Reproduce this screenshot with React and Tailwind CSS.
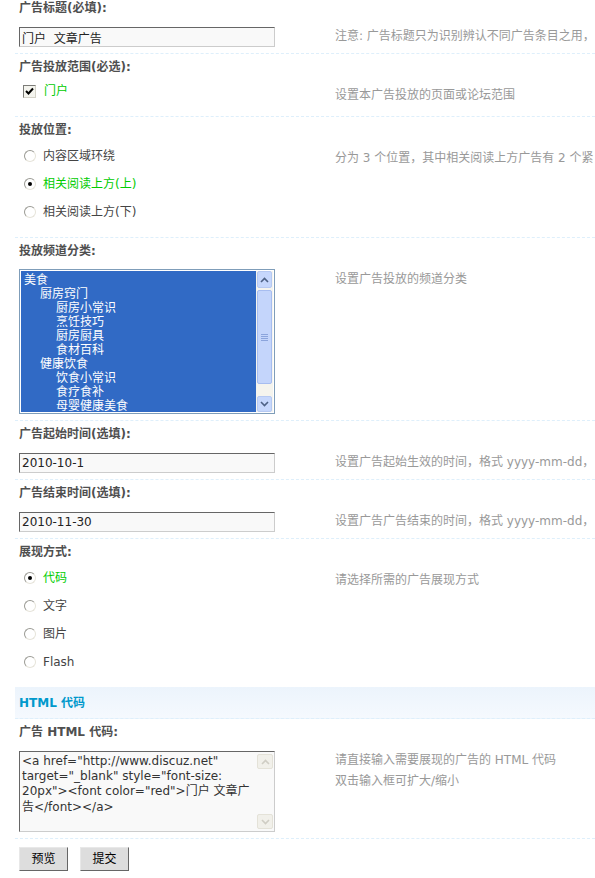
import React from 'react'

const channels = [
  { name: '美食', level: 0 },
  { name: '厨房窍门', level: 1 },
  { name: '厨房小常识', level: 2 },
  { name: '烹饪技巧', level: 2 },
  { name: '厨房厨具', level: 2 },
  { name: '食材百科', level: 2 },
  { name: '健康饮食', level: 1 },
  { name: '饮食小常识', level: 2 },
  { name: '食疗食补', level: 2 },
  { name: '母婴健康美食', level: 2 },
]

const indent = ['pl-[3px]', 'pl-[19px]', 'pl-[35px]']

function Section({ label, first, last, children, tip, bodyCls, tipCls }) {
  return (
    <div className={last ? '' : 'border-b border-dashed border-[#deeffb]'}>
      <div className={`${first ? '' : 'pt-[5px]'} pl-[4px] leading-[16px] font-bold text-[#4f4f4f]`}>{label}</div>
      <div className="flex">
        <div className={`w-[320px] shrink-0 pl-[4px] ${bodyCls}`}>{children}</div>
        <div className={tipCls || 'pt-[12px] leading-[16px] text-[#999] whitespace-nowrap'}>{tip}</div>
      </div>
    </div>
  )
}

function TextInput({ value }) {
  return (
    <input
      readOnly
      defaultValue={value}
      className="block w-[256px] h-[20px] border border-[#ccc] border-t-[#666] border-l-[#666] bg-[#f9f9f9] px-[2px] text-[12px] text-[#222] outline-none"
    />
  )
}

function Radio({ checked, label }) {
  return (
    <div className="h-[28px] flex items-center">
      <span className="ml-[5px] w-[12px] h-[12px] rounded-full border border-[#9a9a94] border-b-[#e6e4da] border-r-[#e6e4da] bg-white flex items-center justify-center">
        {checked && <span className="w-[4px] h-[4px] rounded-full bg-black" />}
      </span>
      <span className={`ml-[7px] ${checked ? 'text-[#00cc00]' : 'text-[#444]'}`}>{label}</span>
    </div>
  )
}

function Arrow({ up, color }) {
  return (
    <svg width="9" height="6" viewBox="0 0 9 6">
      <path d={up ? 'M1 5 L4.5 1.5 L8 5' : 'M1 1 L4.5 4.5 L8 1'} fill="none" stroke={color} strokeWidth="1.6" />
    </svg>
  )
}

export default function App() {
  return (
    <div className="w-[595px] h-[878px] overflow-hidden bg-white pl-[15px] text-[12px] font-['DejaVu_Sans','Noto_Sans_CJK_SC',sans-serif]">
      <Section first label="广告标题(必填):" bodyCls="pt-[11px] pb-[6px]" tip="注意: 广告标题只为识别辨认不同广告条目之用，">
        <TextInput value="门户  文章广告" />
      </Section>

      <Section label="广告投放范围(必选):" bodyCls="pt-[6px] pb-[15px]" tip="设置本广告投放的页面或论坛范围">
        <div className="h-[20px] flex items-center">
          <span className="ml-[4px] w-[13px] h-[13px] border border-[#7c7c78] border-b-[#d4d2c8] border-r-[#d4d2c8] bg-[#f4f4ee] flex items-center justify-center">
            <svg width="9" height="8" viewBox="0 0 9 8">
              <path d="M1 4 L3.5 6.5 L8 1.5" fill="none" stroke="#000" strokeWidth="2" />
            </svg>
          </span>
          <span className="ml-[8px] text-[#00cc00]">门户</span>
        </div>
      </Section>

      <Section label="投放位置:" bodyCls="pt-[4px] pb-[11px]" tip="分为 3 个位置，其中相关阅读上方广告有 2 个紧">
        <Radio label="内容区域环绕" />
        <Radio checked label="相关阅读上方(上)" />
        <Radio label="相关阅读上方(下)" />
      </Section>

      <Section label="投放频道分类:" bodyCls="pt-[10px] pb-[6px]" tip="设置广告投放的频道分类">
        <div className="w-[256px] h-[145px] border border-[#7f9db9] p-[1px] bg-white flex">
          <div className="flex-1 bg-[#316ac5] text-white leading-[14px] pt-[2px] overflow-hidden">
            {channels.map((c) => (
              <div key={c.name} className={indent[c.level]}>{c.name}</div>
            ))}
          </div>
          <div className="w-[17px] flex flex-col bg-[#f5f4ee]">
            <div className="h-[17px] mx-[1px] rounded-[2px] border border-[#b6c9f2] bg-[#c6d7fc] flex items-center justify-center">
              <Arrow up color="#4d6185" />
            </div>
            <div className="mt-[2px] h-[94px] mx-[1px] rounded-[2px] border border-[#a7bdf0] bg-[#c4d5fb] flex flex-col items-center justify-center gap-[1px]">
              <span className="w-[7px] h-[1px] bg-[#8ba4dc]" />
              <span className="w-[7px] h-[1px] bg-[#8ba4dc]" />
              <span className="w-[7px] h-[1px] bg-[#8ba4dc]" />
              <span className="w-[7px] h-[1px] bg-[#8ba4dc]" />
            </div>
            <div className="flex-1" />
            <div className="h-[16px] mx-[1px] rounded-[2px] border border-[#b6c9f2] bg-[#c6d7fc] flex items-center justify-center">
              <Arrow color="#4d6185" />
            </div>
          </div>
        </div>
      </Section>

      <Section label="广告起始时间(选填):" bodyCls="pt-[11px] pb-[6px]" tip="设置广告起始生效的时间，格式 yyyy-mm-dd，">
        <TextInput value="2010-10-1" />
      </Section>

      <Section label="广告结束时间(选填):" bodyCls="pt-[11px] pb-[6px]" tip="设置广告广告结束的时间，格式 yyyy-mm-dd，">
        <TextInput value="2010-11-30" />
      </Section>

      <Section last label="展现方式:" bodyCls="pt-[4px] pb-[11px]" tip="请选择所需的广告展现方式">
        <Radio checked label="代码" />
        <Radio label="文字" />
        <Radio label="图片" />
        <Radio label="Flash" />
      </Section>

      <div className="h-[32px] flex items-center pl-[4px] bg-linear-to-b from-[#ecf4fc] to-[#f5f9fe] border-b border-dashed border-[#deeffb] font-bold text-[#0099cc]">
        HTML 代码
      </div>

      <Section
        label="广告  HTML 代码:"
        bodyCls="pt-[11px] pb-[6px]"
        tipCls="pt-[10px] leading-[21px] text-[#999] whitespace-nowrap"
        tip={
          <>
            <div>请直接输入需要展现的广告的 HTML 代码</div>
            <div>双击输入框可扩大/缩小</div>
          </>
        }
      >
        <div className="w-[256px] h-[81px] border border-[#ccc] border-t-[#666] border-l-[#666] bg-[#f9f9f9] flex">
          <div className="flex-1 pl-[2px] pt-[2px] leading-[15px] text-[#333] whitespace-nowrap overflow-hidden">
            <div>{'<a href="http://www.discuz.net"'}</div>
            <div>{'target="_blank" style="font-size:'}</div>
            <div>{'20px"><font color="red">门户  文章广'}</div>
            <div className="leading-[17px]">{'告</font></a>'}</div>
          </div>
          <div className="w-[17px] flex flex-col justify-between py-[2px] pr-[1px]">
            <div className="h-[15px] rounded-[2px] border border-[#e4e2d8] bg-[#f1f0ea] flex items-center justify-center">
              <Arrow up color="#cfcdc4" />
            </div>
            <div className="h-[15px] rounded-[2px] border border-[#e4e2d8] bg-[#f1f0ea] flex items-center justify-center">
              <Arrow color="#cfcdc4" />
            </div>
          </div>
        </div>
      </Section>

      <div className="pt-[8px] pl-[4px] flex gap-[12px]">
        <button className="w-[49px] h-[24px] border border-[#e8e8e8] border-r-[#666] border-b-[#666] bg-[#dddddd] text-black">预览</button>
        <button className="w-[49px] h-[24px] border border-[#e8e8e8] border-r-[#666] border-b-[#666] bg-[#dddddd] text-black">提交</button>
      </div>
    </div>
  )
}
